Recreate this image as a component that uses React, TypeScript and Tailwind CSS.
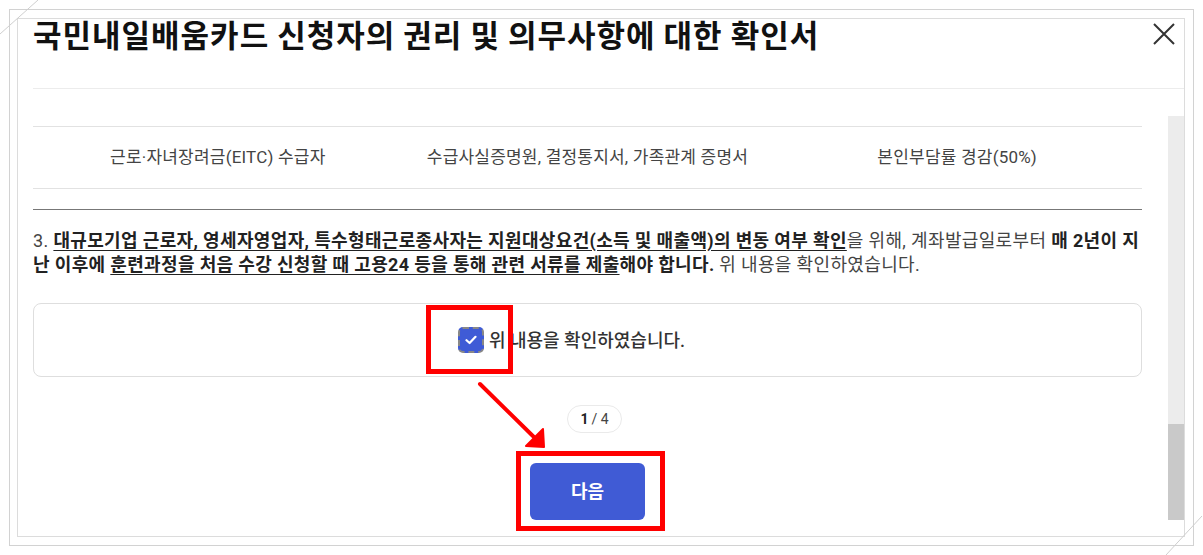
const font = { fontFamily: 'Roboto, "Noto Sans CJK KR", sans-serif' };

const rows = [["근로·자녀장려금(EITC) 수급자", "수급사실증명원, 결정통지서, 가족관계 증명서", "본인부담률 경감(50%)"]];

const CornerMarks = () => (
	<svg className="absolute left-0 top-0 pointer-events-none" width="1203" height="555">
		<line x1="0" y1="34" x2="38" y2="0" stroke="#cfcfcf" strokeWidth="1" />
		<line x1="1202" y1="516" x2="1166" y2="555" stroke="#cfcfcf" strokeWidth="1" />
	</svg>
);

const Annotations = () => (
	<>
		<div className="absolute left-[426px] top-[305px] w-[87px] h-[69px] border-[5px] border-[#ff0000]" />
		<div className="absolute left-[516px] top-[451px] w-[149px] h-[80px] border-[5px] border-[#ff0000]" />
		<svg className="absolute left-0 top-0 pointer-events-none" width="1203" height="555">
			<line x1="480" y1="384" x2="540" y2="443" stroke="#ff0000" strokeWidth="4" strokeLinecap="round" />
			<polygon points="544,447 526,446 543,429" fill="#ff0000" stroke="#ff0000" strokeWidth="2" strokeLinejoin="round" />
		</svg>
	</>
);

export default function App() {
	return (
		<div className="relative w-[1203px] h-[555px] bg-white overflow-hidden" style={font}>
			<div className="ml-[9px] mt-[9px] w-[1185px] h-[537px] border border-[#d2d2d2] pl-[7px] pt-[8px]">
				<div className="w-[1168px] h-[519px] border border-[#dcdcdc] flex flex-col">
					{/* header */}
					<div className="ml-[15px] h-[70px] border-b border-[#ececec] flex justify-between">
						<h1
							className="-mt-[3px] text-[31px] leading-[36px] font-bold text-[#111] tracking-[1px]"
							style={{ fontFamily: '"Noto Sans CJK KR", sans-serif' }}
						>
							국민내일배움카드 신청자의 권리 및 의무사항에 대한 확인서
						</h1>
						<button className="mt-[4px] mr-[9px] w-[22px] h-[22px]">
							<svg width="22" height="22" viewBox="0 0 22 22">
								<path d="M1 1L21 21M21 1L1 21" stroke="#333" strokeWidth="2" />
							</svg>
						</button>
					</div>

					{/* body */}
					<div className="flex flex-1">
						<div className="flex-1 pl-[15px] pr-[26px]">
							<div className="mt-[37px] border-t border-[#e2e2e2]">
								{rows.map((r, i) => (
									<div key={i} className="grid grid-cols-3 h-[62px] items-center border-b border-[#e2e2e2] text-[17px] text-[#444] tracking-[0.2px]">
										{r.map((c) => (
											<div key={c} className="text-center">{c}</div>
										))}
									</div>
								))}
							</div>
							<div className="mt-[20px] border-t border-[#777]" />

							<p className="mt-[19px] text-[18px] leading-[24px] text-[#444] tracking-[0.35px]">
								3.{" "}
								<b className="underline underline-offset-[3px] text-[#222]">
									대규모기업 근로자, 영세자영업자, 특수형태근로종사자는 지원대상요건(소득 및 매출액)의 변동 여부 확인
								</b>
								을 위해, 계좌발급일로부터 <b className="text-[#222]">매 2년이 지난 이후에 </b>
								<b className="underline underline-offset-[3px] text-[#222]">
									훈련과정을 처음 수강 신청할 때 고용24 등을 통해 관련 서류를 제출
								</b>
								<b className="text-[#222]">해야 합니다.</b> 위 내용을 확인하였습니다.
							</p>

							<div className="mt-[26px] h-[74px] border border-[#dedede] rounded-[8px] flex items-center justify-center pr-[32px]">
								<label className="flex items-center gap-[5px]">
									<span className="w-[26px] h-[26px] rounded-[5px] border-2 border-dashed border-[#888] bg-[#3f5bd6] flex items-center justify-center">
										<svg width="12" height="10" viewBox="0 0 12 10">
											<path d="M1.5 5.2L4.6 8L10.5 1.8" stroke="#fff" strokeWidth="2.2" fill="none" strokeLinecap="round" strokeLinejoin="round" />
										</svg>
									</span>
									<span className="text-[18px] font-medium text-[#333]">위 내용을 확인하였습니다.</span>
								</label>
							</div>

							<div className="mt-[28px] flex justify-center">
								<span className="ml-[14px] h-[28px] px-[12px] rounded-full border border-[#eaeaea] text-[14px] text-[#444] flex items-center">
									<b className="text-[#222] mr-[3px]">1</b>/ 4
								</span>
							</div>

							<div className="mt-[30px] flex justify-center">
								<button className="w-[115px] h-[57px] rounded-[6px] bg-[#405bd5] text-white text-[18px] font-bold">다음</button>
							</div>
						</div>

						{/* scrollbar */}
						<div className="w-[16px] mt-[27px] mb-[16px] bg-[#ececec] flex flex-col justify-end">
							<div className="h-[96px] bg-[#c9c9c9]" />
						</div>
					</div>
				</div>
			</div>
			<CornerMarks />
			<Annotations />
		</div>
	);
}
